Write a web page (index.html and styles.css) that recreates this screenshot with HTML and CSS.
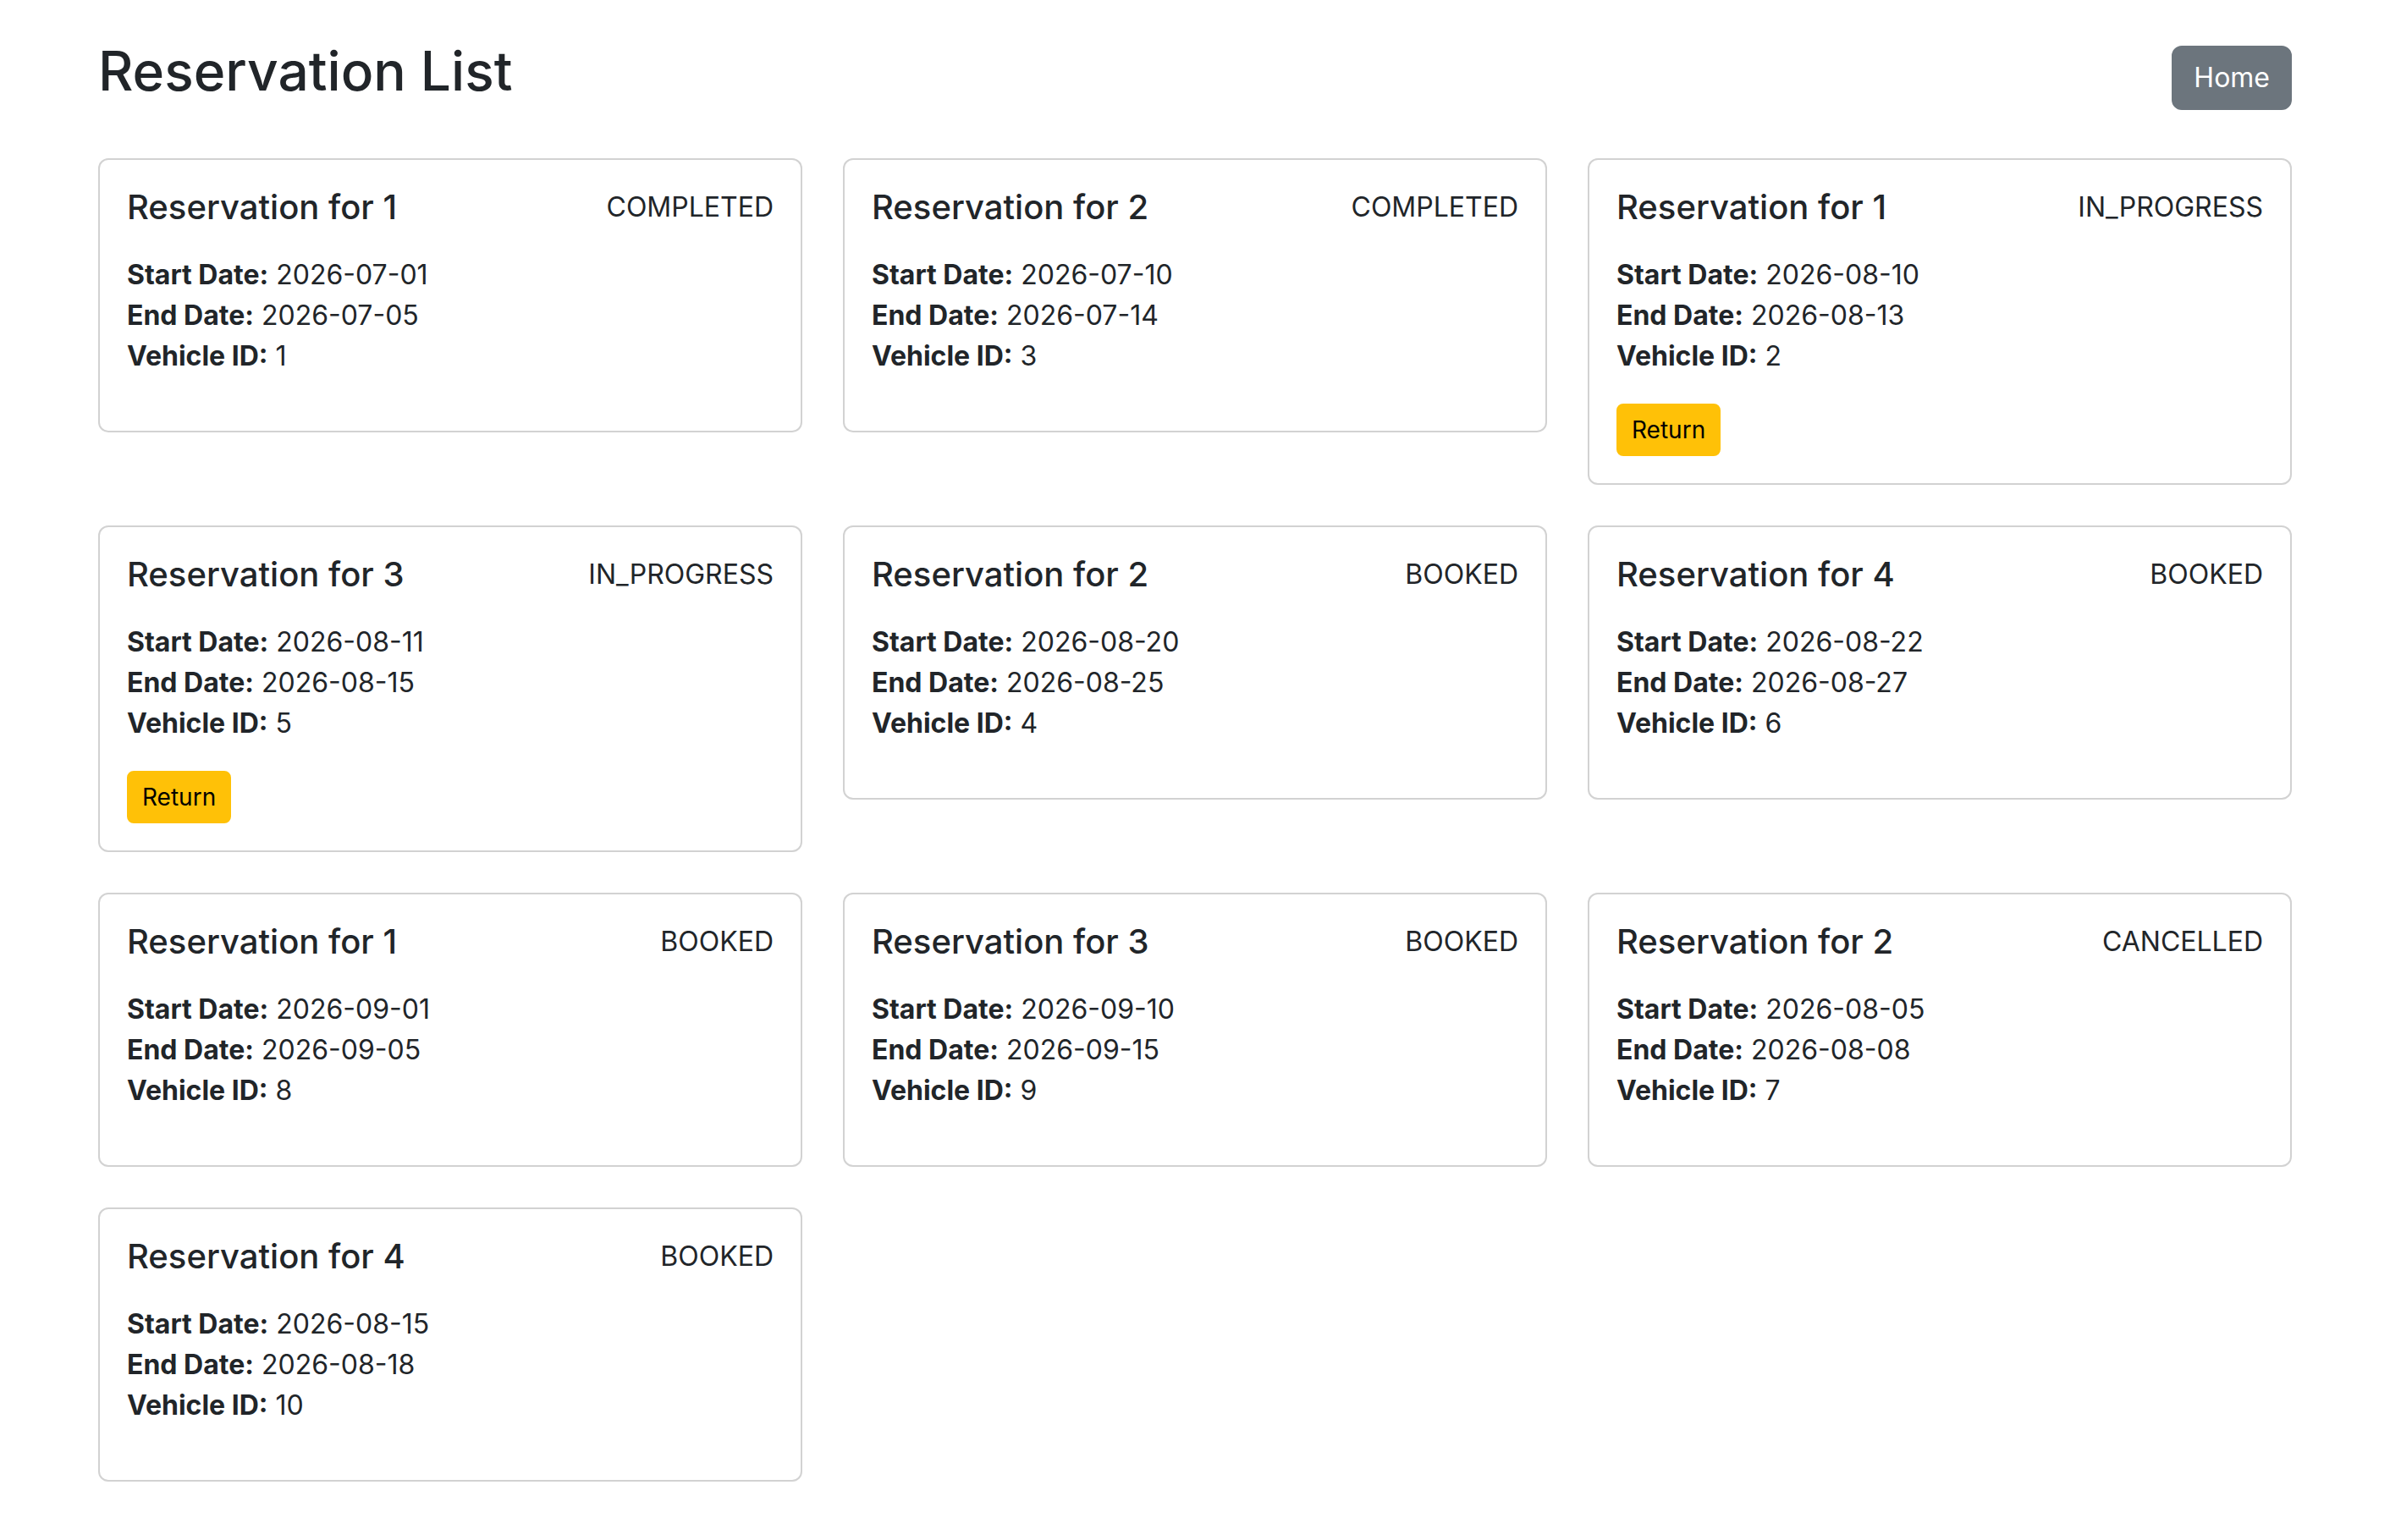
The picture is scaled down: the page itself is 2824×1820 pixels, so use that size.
FILE: index.html
```html
<!DOCTYPE html>
<html lang="en">
<head>
<meta charset="utf-8">
<title>Reservation List</title>
<link rel="stylesheet" href="styles.css">
</head>
<body>
<div class="container">
  <div class="page-header">
    <h2 class="page-title">Reservation List</h2>
    <a class="btn btn-home" href="#">Home</a>
  </div>
  <div class="card-grid">
    <div class="card">
      <div class="card-head"><h5 class="card-title">Reservation for 1</h5><span class="status">COMPLETED</span></div>
      <p class="card-text"><strong>Start Date:</strong> 2026-07-01<br><strong>End Date:</strong> 2026-07-05<br><strong>Vehicle ID:</strong> 1</p>
    </div>
    <div class="card">
      <div class="card-head"><h5 class="card-title">Reservation for 2</h5><span class="status">COMPLETED</span></div>
      <p class="card-text"><strong>Start Date:</strong> 2026-07-10<br><strong>End Date:</strong> 2026-07-14<br><strong>Vehicle ID:</strong> 3</p>
    </div>
    <div class="card">
      <div class="card-head"><h5 class="card-title">Reservation for 1</h5><span class="status">IN_PROGRESS</span></div>
      <p class="card-text"><strong>Start Date:</strong> 2026-08-10<br><strong>End Date:</strong> 2026-08-13<br><strong>Vehicle ID:</strong> 2</p>
      <button class="btn btn-return">Return</button>
    </div>
    <div class="card">
      <div class="card-head"><h5 class="card-title">Reservation for 3</h5><span class="status">IN_PROGRESS</span></div>
      <p class="card-text"><strong>Start Date:</strong> 2026-08-11<br><strong>End Date:</strong> 2026-08-15<br><strong>Vehicle ID:</strong> 5</p>
      <button class="btn btn-return">Return</button>
    </div>
    <div class="card">
      <div class="card-head"><h5 class="card-title">Reservation for 2</h5><span class="status">BOOKED</span></div>
      <p class="card-text"><strong>Start Date:</strong> 2026-08-20<br><strong>End Date:</strong> 2026-08-25<br><strong>Vehicle ID:</strong> 4</p>
    </div>
    <div class="card">
      <div class="card-head"><h5 class="card-title">Reservation for 4</h5><span class="status">BOOKED</span></div>
      <p class="card-text"><strong>Start Date:</strong> 2026-08-22<br><strong>End Date:</strong> 2026-08-27<br><strong>Vehicle ID:</strong> 6</p>
    </div>
    <div class="card">
      <div class="card-head"><h5 class="card-title">Reservation for 1</h5><span class="status">BOOKED</span></div>
      <p class="card-text"><strong>Start Date:</strong> 2026-09-01<br><strong>End Date:</strong> 2026-09-05<br><strong>Vehicle ID:</strong> 8</p>
    </div>
    <div class="card">
      <div class="card-head"><h5 class="card-title">Reservation for 3</h5><span class="status">BOOKED</span></div>
      <p class="card-text"><strong>Start Date:</strong> 2026-09-10<br><strong>End Date:</strong> 2026-09-15<br><strong>Vehicle ID:</strong> 9</p>
    </div>
    <div class="card">
      <div class="card-head"><h5 class="card-title">Reservation for 2</h5><span class="status">CANCELLED</span></div>
      <p class="card-text"><strong>Start Date:</strong> 2026-08-05<br><strong>End Date:</strong> 2026-08-08<br><strong>Vehicle ID:</strong> 7</p>
    </div>
    <div class="card">
      <div class="card-head"><h5 class="card-title">Reservation for 4</h5><span class="status">BOOKED</span></div>
      <p class="card-text"><strong>Start Date:</strong> 2026-08-15<br><strong>End Date:</strong> 2026-08-18<br><strong>Vehicle ID:</strong> 10</p>
    </div>
  </div>
</div>
</body>
</html>
```
FILE: styles.css
```css
* { box-sizing: border-box; }

html, body {
  margin: 0;
  background: #fff;
}

body {
  font-family: Inter, "Noto Sans", "Liberation Sans", sans-serif;
  font-size: 32px;
  line-height: 1.5;
  color: #212529;
}

.container {
  width: 2592px;
  margin: 0 auto;
  padding-top: 46px;
}

.page-header {
  display: flex;
  justify-content: space-between;
  align-items: center;
  margin-bottom: 48px;
}

.page-title {
  margin: 0 0 16px;
  font-size: 64px;
  line-height: 1.2;
  font-weight: 500;
}

.btn {
  display: inline-block;
  font-family: inherit;
  border: 2px solid transparent;
  text-decoration: none;
  cursor: pointer;
}

.btn-home {
  font-size: 32px;
  line-height: 1.5;
  padding: 12px 24px;
  border-radius: 12px;
  background: #6c757d;
  border-color: #6c757d;
  color: #fff;
}

.card-grid {
  display: grid;
  grid-template-columns: repeat(3, 1fr);
  gap: 48px;
  align-items: start;
}

.card {
  border: 2px solid rgba(0, 0, 0, 0.175);
  border-radius: 12px;
  padding: 32px;
  background: #fff;
}

.card-head {
  display: flex;
  justify-content: space-between;
  align-items: center;
  margin-bottom: 32px;
}

.card-title {
  margin: 0;
  font-size: 40px;
  line-height: 1.2;
  font-weight: 500;
}

.status {
  font-size: 32px;
  line-height: 1.5;
}

.card-text {
  margin: 0 0 32px;
}

.card-text strong {
  font-weight: 700;
}

.btn-return {
  font-size: 28px;
  line-height: 1.5;
  padding: 8px 16px;
  border-radius: 8px;
  background: #ffc107;
  border-color: #ffc107;
  color: #000;
}
```
